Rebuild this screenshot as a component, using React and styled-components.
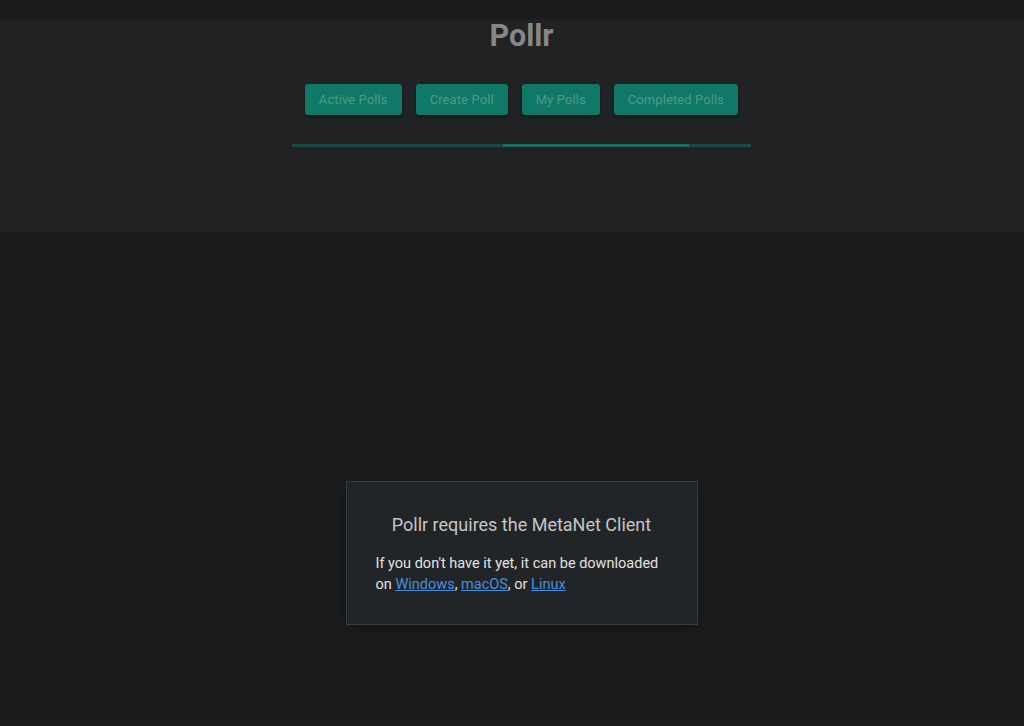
import styled, { createGlobalStyle } from "styled-components";

const GlobalStyle = createGlobalStyle`
  html, body {
    margin: 0;
    padding: 0;
    background-color: #1b1c1e;
    font-family: Roboto, "Liberation Sans", Arial, sans-serif;
  }
  * {
    box-sizing: border-box;
  }
`;

const Page = styled.div`
  min-height: 726px;
  padding-top: 19px;
  background-color: #1b1c1e;
`;

const Header = styled.header`
  height: 213px;
  background-color: #212224;
  display: flex;
  flex-direction: column;
  align-items: center;
  padding-left: 19px;
`;

const Title = styled.h1`
  margin: 0;
  font-size: 30.5px;
  line-height: 34px;
  font-weight: 700;
  color: #878787;
`;

const Nav = styled.nav`
  display: flex;
  gap: 14px;
  margin-top: 31px;
`;

const NavButton = styled.button`
  height: 31px;
  padding: 0 14px;
  border: none;
  border-radius: 3px;
  background-color: #0f7866;
  color: #4f9a87;
  font-family: inherit;
  font-size: 13px;
  letter-spacing: 0.1px;
  box-shadow: 0 2px 3px rgba(0, 0, 0, 0.35);
  cursor: pointer;
`;

const Track = styled.div`
  position: relative;
  width: 459px;
  height: 3px;
  margin-top: 29px;
  background-color: #164c44;
  overflow: hidden;
`;

const Bar = styled.div`
  position: absolute;
  top: 0;
  left: 46%;
  width: 186px;
  height: 100%;
  background-color: #1c6d5f;
`;

const Main = styled.main`
  display: flex;
  justify-content: center;
  padding: 249px 0 0 19px;
`;

const Card = styled.section`
  width: 352px;
  padding: 31px 29px 29px;
  background-color: #222527;
  border: 1px solid #3a3d3f;
  box-shadow: 0 4px 14px rgba(0, 0, 0, 0.3);
`;

const CardTitle = styled.h2`
  margin: 0 0 16px;
  text-align: center;
  font-size: 18px;
  line-height: 24px;
  font-weight: 400;
  color: #c6c6c6;
`;

const Text = styled.p`
  margin: 0;
  font-size: 14.5px;
  line-height: 21px;
  color: #e2e2e2;
`;

const Link = styled.a`
  color: #4a8fdc;
  text-decoration: underline;
`;

export default function App() {
  return (
    <>
      <GlobalStyle />
      <Page>
        <Header>
          <Title>Pollr</Title>
          <Nav>
            <NavButton>Active Polls</NavButton>
            <NavButton>Create Poll</NavButton>
            <NavButton>My Polls</NavButton>
            <NavButton>Completed Polls</NavButton>
          </Nav>
          <Track>
            <Bar />
          </Track>
        </Header>
        <Main>
          <Card>
            <CardTitle>Pollr requires the MetaNet Client</CardTitle>
            <Text>
              If you don't have it yet, it can be downloaded on{" "}
              <Link href="#">Windows</Link>, <Link href="#">macOS</Link>, or{" "}
              <Link href="#">Linux</Link>
            </Text>
          </Card>
        </Main>
      </Page>
    </>
  );
}
